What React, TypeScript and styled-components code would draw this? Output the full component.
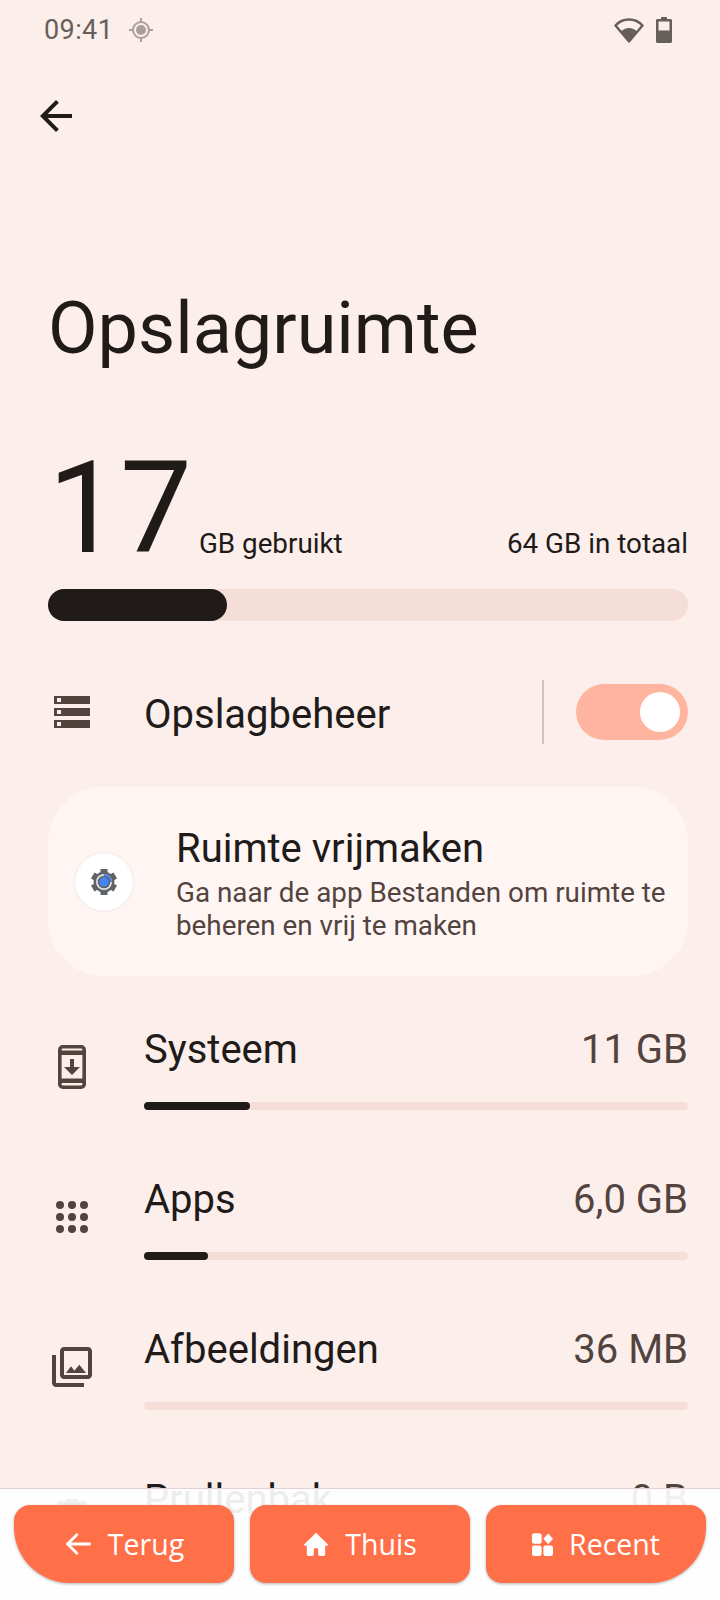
import styled, { createGlobalStyle } from "styled-components";

const GlobalStyle = createGlobalStyle`
  html, body { margin: 0; padding: 0; background: #fceeeb; }
  * { box-sizing: border-box; }
`;

type Usage = { name: string; size: string; fill: number; icon: React.ReactNode };

const ICON_DARK = "#53433f";

const SystemIcon = () => (
  <svg width="48" height="48" viewBox="0 0 48 48" fill={ICON_DARK}>
    <rect x="11.800" y="3.800" width="24.400" height="40.400" rx="3" fill="none" stroke={ICON_DARK} strokeWidth="3.600" />
    <rect x="11" y="7.500" width="26" height="4.500" />
    <rect x="11" y="35.500" width="26" height="4.500" />
    <path d="M22 16h4v8h6l-8 8-8-8h6z" />
  </svg>
);

const DotsIcon = () => (
  <svg width="48" height="48" viewBox="0 0 48 48" fill={ICON_DARK}>
    {[12, 24, 36].flatMap((y) =>
      [12, 24, 36].map((x) => <circle key={`${x}-${y}`} cx={x} cy={y} r="4" />)
    )}
  </svg>
);

const PhotosIcon = () => (
  <svg width="48" height="48" viewBox="0 0 24 24" fill={ICON_DARK}>
    <path d="M20 4v12H8V4h12m0-2H8c-1.100 0-2 .9-2 2v12c0 1.100.9 2 2 2h12c1.100 0 2-.9 2-2V4c0-1.100-.9-2-2-2zm-8.500 9.670l1.690 2.260 2.480-3.100L19 15H9zM2 6v14c0 1.100.9 2 2 2h14v-2H4V6H2z" />
  </svg>
);

const TrashIcon = () => (
  <svg width="48" height="48" viewBox="0 0 24 24" fill={ICON_DARK}>
    <path d="M16 9v10H8V9h8m-1.500-6h-5l-1 1H5v2h14V4h-3.500l-1-1zM18 7H6v12c0 1.100.9 2 2 2h8c1.100 0 2-.9 2-2V7z" />
  </svg>
);

const StackIcon = () => (
  <svg width="48" height="48" viewBox="0 0 48 48" fill={ICON_DARK} fillRule="evenodd">
    {[8, 20, 32].map((y) => (
      <path key={y} d={`M6 ${y}h36v8H6z M9 ${y + 2}v4h4v-4z`} />
    ))}
  </svg>
);

const GearBadgeIcon = () => (
  <svg width="30" height="30" viewBox="0 0 30 30">
    {[0, 60, 120, 180, 240, 300].map((a) => (
      <rect key={a} x="11.500" y="2" width="7" height="6" fill="#5f6368" transform={`rotate(${a} 15 15)`} />
    ))}
    <circle cx="15" cy="15" r="10.500" fill="#5f6368" />
    <circle cx="15" cy="15" r="8" fill="#e4e4e4" />
    <path d="M15 7a8 8 0 0 1 8 8h-2a6 6 0 0 0-6-6z" fill="#4285f4" />
    <circle cx="15" cy="15" r="6.300" fill="#5f6368" />
    <circle cx="15" cy="15" r="4.700" fill="#4285f4" />
  </svg>
);

const usages: Usage[] = [
  { name: "Systeem", size: "11 GB", fill: 19.5, icon: <SystemIcon /> },
  { name: "Apps", size: "6,0 GB", fill: 11.7, icon: <DotsIcon /> },
  { name: "Afbeeldingen", size: "36 MB", fill: 0, icon: <PhotosIcon /> },
  { name: "Prullenbak", size: "0 B", fill: 0, icon: <TrashIcon /> },
];

export default function App() {
  return (
    <>
      <GlobalStyle />
      <Screen>
        <StatusBar>
          <Clock>09:41</Clock>
          <svg width="26" height="26" viewBox="0 0 26 26" fill="none" stroke="#aa9f9c" strokeWidth="2">
            <circle cx="13" cy="13" r="8" />
            <circle cx="13" cy="13" r="5" fill="#aa9f9c" stroke="none" />
            <path d="M13 1v4M13 21v4M1 13h4M21 13h4" />
          </svg>
          <StatusIcons>
            <svg width="30" height="26" viewBox="0 0 30 26">
              <path d="M15 24.500 1.500 8.500C5 4.500 10 2.500 15 2.500s10 2 13.500 6L15 24.500z" fill="none" stroke="#665e5b" strokeWidth="2.400" strokeLinejoin="round" />
              <path d="M15 24.500 7 14.500c2-2 5-3.500 8-3.500s6 1.500 8 3.500L15 24.500z" fill="#665e5b" />
            </svg>
            <svg width="16" height="26" viewBox="0 0 16 26">
              <path d="M5 0h6v2h3.500c.8 0 1.500.7 1.500 1.500v21c0 .8-.7 1.500-1.500 1.500h-13C.7 26 0 25.300 0 24.500v-21C0 2.700.7 2 1.500 2H5V0z" fill="#665e5b" />
              <rect x="2.500" y="4.500" width="11" height="9" fill="#fceeeb" />
            </svg>
          </StatusIcons>
        </StatusBar>

        <BackButton aria-label="Terug">
          <svg width="48" height="48" viewBox="0 0 24 24" fill="#201a18">
            <path d="M20 11H7.830l5.590-5.590L12 4l-8 8 8 8 1.410-1.410L7.830 13H20v-2z" />
          </svg>
        </BackButton>

        <Title>Opslagruimte</Title>

        <Summary>
          <BigNumber>17</BigNumber>
          <SummaryLabel>GB gebruikt</SummaryLabel>
          <SummaryTotal>64 GB in totaal</SummaryTotal>
        </Summary>
        <MainTrack>
          <MainFill />
        </MainTrack>

        <ManagerRow>
          <IconSlot>
            <StackIcon />
          </IconSlot>
          <ManagerLabel>Opslagbeheer</ManagerLabel>
          <Divider />
          <Toggle>
            <Knob />
          </Toggle>
        </ManagerRow>

        <Card>
          <AppBadge>
            <GearBadgeIcon />
          </AppBadge>
          <CardText>
            <CardTitle>Ruimte vrijmaken</CardTitle>
            <CardBody>Ga naar de app Bestanden om ruimte te beheren en vrij te maken</CardBody>
          </CardText>
        </Card>

        <UsageList>
          {usages.map((u) => (
            <UsageRow key={u.name}>
              <IconSlot>{u.icon}</IconSlot>
              <UsageMain>
                <UsageHead>
                  <UsageName>{u.name}</UsageName>
                  <UsageSize>{u.size}</UsageSize>
                </UsageHead>
                <UsageTrack>
                  <UsageFill style={{ width: `${u.fill}%` }} />
                </UsageTrack>
              </UsageMain>
            </UsageRow>
          ))}
        </UsageList>

        <BottomNav>
          <NavButton $corner="left">
            <svg width="28" height="28" viewBox="0 0 24 24" fill="none" stroke="#fff" strokeWidth="2.400" strokeLinecap="round" strokeLinejoin="round">
              <path d="M22 12H3M11 4l-8 8 8 8" />
            </svg>
            Terug
          </NavButton>
          <NavButton>
            <svg width="26" height="26" viewBox="0 0 24 24" fill="#fff">
              <path d="M12 1.500 1.200 12.200c-.5.600-.2 1.300.6 1.300H3.500v8c0 .8.700 1.500 1.500 1.500h3.500c.8 0 1.500-.7 1.500-1.500V17c0-.6.400-1 1-1h2c.6 0 1 .4 1 1v4.500c0 .8.700 1.500 1.500 1.500H19c.8 0 1.500-.7 1.500-1.500v-8h1.700c.8 0 1.100-.7.600-1.300L12 1.500z" />
            </svg>
            Thuis
          </NavButton>
          <NavButton $corner="right">
            <svg width="21" height="23" viewBox="0 0 24 26" fill="#fff">
              <rect x="0" y="0" width="11" height="12" rx="2.500" />
              <rect x="0" y="14" width="11" height="12" rx="2.500" />
              <rect x="13" y="14" width="11" height="12" rx="2.500" />
              <path d="M18.500 1 23.500 6.500 18.500 12 13.500 6.500z" strokeLinejoin="round" stroke="#fff" />
            </svg>
            Recent
          </NavButton>
        </BottomNav>
      </Screen>
    </>
  );
}

const Screen = styled.div`
  position: relative;
  width: 720px;
  height: 1600px;
  overflow: hidden;
  background: #fceeeb;
  color: #201a18;
  font-family: Roboto, "Noto Sans", sans-serif;
`;

const StatusBar = styled.div`
  display: flex;
  align-items: center;
  gap: 15px;
  height: 60px;
  padding: 0 48px 0 44px;
`;

const Clock = styled.span`
  font-size: 27px;
  font-weight: 400;
  color: #665e5b;
  letter-spacing: 0.4px;
`;

const StatusIcons = styled.div`
  display: flex;
  align-items: center;
  gap: 12px;
  margin-left: auto;
`;

const BackButton = styled.button`
  display: block;
  width: 48px;
  height: 48px;
  margin: 32px 0 0 32px;
  padding: 0;
  border: 0;
  background: none;
`;

const Title = styled.h1`
  margin: 147px 0 0 48px;
  font-size: 72px;
  line-height: 84px;
  font-weight: 400;
`;

const Summary = styled.div`
  display: flex;
  align-items: flex-start;
  height: 144px;
  margin: 65px 32px 0 48px;
`;

const BigNumber = styled.span`
  font-size: 128px;
  line-height: 144px;
  font-weight: 400;
  margin-right: 7px;
`;

const SummaryLabel = styled.span`
  margin-top: 90px;
  font-size: 27.8px;
  line-height: 36px;
`;

const SummaryTotal = styled(SummaryLabel)`
  margin-left: auto;
`;

const MainTrack = styled.div`
  height: 32px;
  margin: 9px 32px 0 48px;
  border-radius: 16px;
  background: #f5ded8;
`;

const MainFill = styled.div`
  width: 179px;
  height: 100%;
  border-radius: 16px;
  background: #201a18;
`;

const ManagerRow = styled.div`
  display: flex;
  align-items: center;
  height: 64px;
  margin: 59px 32px 0 48px;
`;

const IconSlot = styled.div`
  display: flex;
  flex: none;
  justify-content: center;
  width: 48px;
  height: 48px;
`;

const ManagerLabel = styled.span`
  margin-left: 48px;
  padding-top: 4px;
  font-size: 40px;
`;

const Divider = styled.div`
  width: 2px;
  height: 64px;
  margin-left: auto;
  background: #d8c2bc;
`;

const Toggle = styled.div`
  display: flex;
  align-items: center;
  justify-content: flex-end;
  width: 112px;
  height: 56px;
  margin-left: 32px;
  padding-right: 8px;
  border-radius: 28px;
  background: #ffb4a0;
`;

const Knob = styled.div`
  width: 40px;
  height: 40px;
  border-radius: 50%;
  background: #fff;
`;

const Card = styled.div`
  display: flex;
  align-items: center;
  height: 189px;
  margin: 43px 32px 0 48px;
  padding: 0 16px 0 27px;
  border-radius: 56px;
  background: #fff6f4;
`;

const AppBadge = styled.div`
  display: flex;
  flex: none;
  align-items: center;
  justify-content: center;
  width: 58px;
  height: 58px;
  border-radius: 50%;
  background: #fff;
  box-shadow: 0 0 2px rgba(120, 90, 80, 0.25);
`;

const CardText = styled.div`
  margin-left: 43px;
  padding-top: 2px;
`;

const CardTitle = styled.div`
  font-size: 40px;
  line-height: 52px;
`;

const CardBody = styled.div`
  font-size: 27.8px;
  line-height: 33px;
  margin-top: 1px;
  color: #53433f;
`;

const UsageList = styled.div`
  display: flex;
  flex-direction: column;
  gap: 50px;
  margin: 41px 32px 0 48px;
`;

const UsageRow = styled.div`
  display: flex;
  align-items: center;
  height: 100px;
`;

const UsageMain = styled.div`
  flex: 1;
  margin-left: 48px;
`;

const UsageHead = styled.div`
  display: flex;
  justify-content: space-between;
  align-items: baseline;
`;

const UsageName = styled.span`
  font-size: 40px;
  line-height: 52px;
`;

const UsageSize = styled.span`
  font-size: 40px;
  line-height: 52px;
  color: #53433f;
`;

const UsageTrack = styled.div`
  height: 8px;
  margin-top: 26px;
  border-radius: 4px;
  background: #f5ded8;
`;

const UsageFill = styled.div`
  height: 100%;
  border-radius: 4px;
  background: #201a18;
`;

const BottomNav = styled.nav`
  position: absolute;
  left: 0;
  right: 0;
  bottom: 0;
  display: flex;
  gap: 16px;
  height: 112px;
  padding: 16px 14px 17px;
  border-top: 1px solid #e0d2d0;
  background: rgba(255, 255, 255, 0.92);
`;

const NavButton = styled.button<{ $corner?: "left" | "right" }>`
  display: flex;
  flex: 1;
  align-items: center;
  justify-content: center;
  gap: 16px;
  padding: 0;
  border: 0;
  border-radius: 16px;
  border-bottom-left-radius: ${(p) => (p.$corner === "left" ? "56px 56px" : "16px")};
  border-bottom-right-radius: ${(p) => (p.$corner === "right" ? "56px 56px" : "16px")};
  background: #ff7049;
  box-shadow: 0 1px 3px rgba(0, 0, 0, 0.3);
  color: #fff;
  font-family: "Open Sans", sans-serif;
  font-size: 28.5px;
  font-weight: 500;
`;
